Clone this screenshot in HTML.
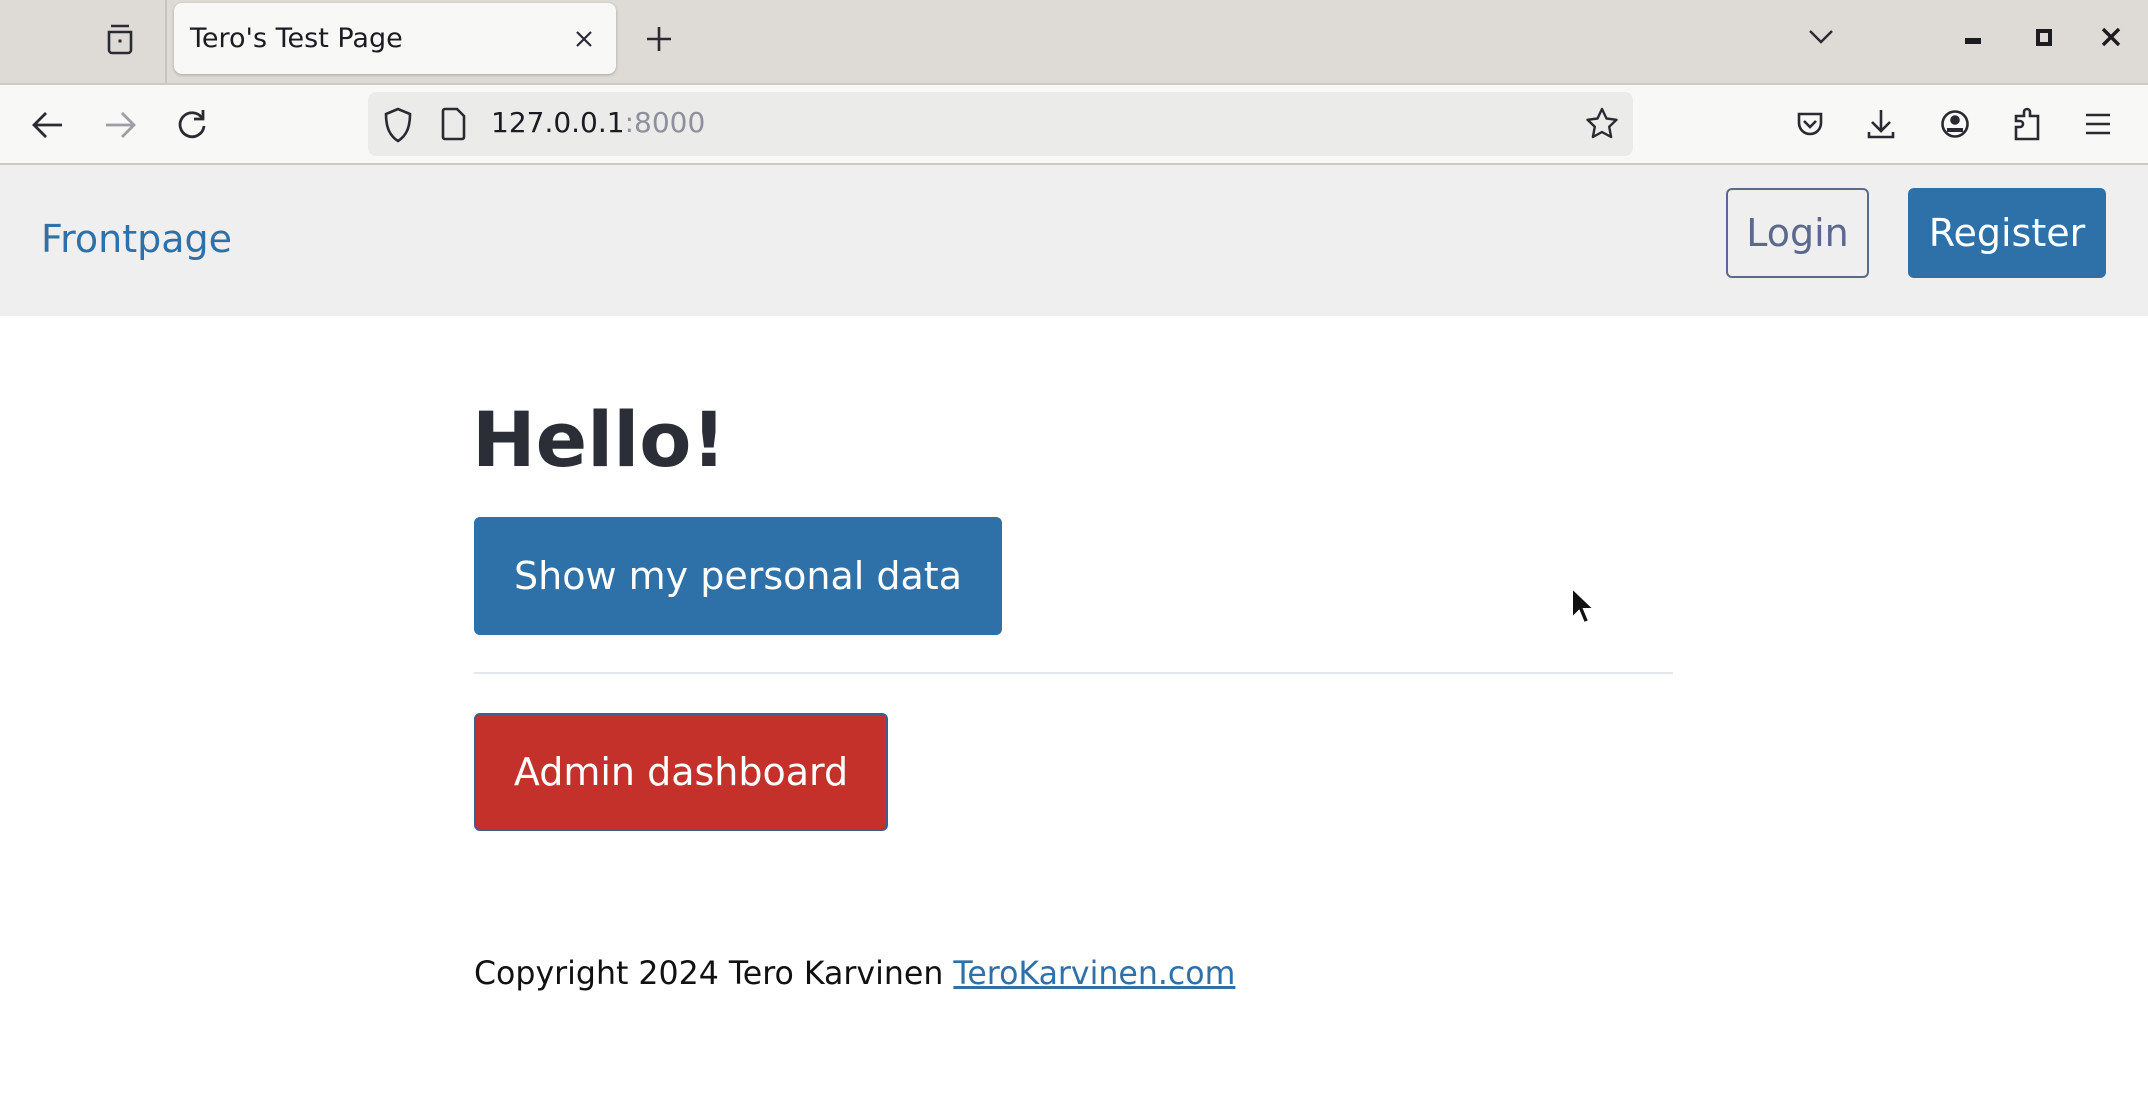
<!DOCTYPE html>
<html><head><meta charset="utf-8"><style>
*{margin:0;padding:0;box-sizing:border-box}
body{width:2148px;height:1094px;overflow:hidden;background:#fff;font-family:"DejaVu Sans","Liberation Sans",sans-serif;position:relative}
.abs{position:absolute}
#tabbar{left:0;top:0;width:2148px;height:83px;background:#dedbd6}
#toolbar{left:0;top:83px;width:2148px;height:82px;background:#f8f8f7;border-top:2px solid #cdc9c4;border-bottom:2px solid #cdc9c4}
#tab{left:174px;top:3px;width:442px;height:71px;background:#f8f8f7;border-radius:8px;box-shadow:0 1px 3px rgba(0,0,0,.25)}
#tab span{position:absolute;left:16px;top:20px;font-size:27px;color:#1c1b22}
#url{left:368px;top:92px;width:1265px;height:64px;background:#ebebea;border-radius:8px}
#navbar{left:0;top:165px;width:2148px;height:151px;background:#efefef}
.btn{position:absolute;border-radius:6px;color:#fff;font-size:38px;display:flex;align-items:center;justify-content:center}
svg{position:absolute}
</style></head><body>
<div id="tabbar" class="abs"></div>
<div class="abs" style="left:165px;top:0;width:2px;height:83px;background:#c8c4bf"></div>
<svg style="left:103px;top:22px" width="34" height="34" viewBox="0 0 34 34" fill="none" stroke="#2b2a33" stroke-width="2.6"><path d="M8 4h18M6 10h22v18a3 3 0 0 1-3 3H9a3 3 0 0 1-3-3z"/><rect x="15.5" y="17.5" width="3" height="3" fill="#2b2a33" stroke="none"/></svg>
<div id="tab" class="abs"><span>Tero's Test Page</span>
<svg style="left:400px;top:26px" width="20" height="20" viewBox="0 0 20 20" stroke="#2b2a33" stroke-width="2.2"><path d="M3 3l14 14M17 3L3 17"/></svg></div>
<svg style="left:644px;top:24px" width="30" height="30" viewBox="0 0 30 30" stroke="#2b2a33" stroke-width="2.6"><path d="M15 3v24M3 15h24"/></svg>
<svg style="left:1808px;top:28px" width="26" height="18" viewBox="0 0 26 18" fill="none" stroke="#2b2a33" stroke-width="2.4"><path d="M2 3l11 11L24 3"/></svg>
<div class="abs" style="left:1965px;top:38px;width:16px;height:6px;background:#1c1b22"></div>
<div class="abs" style="left:2036px;top:29px;width:16px;height:17px;border:4px solid #1c1b22"></div>
<svg style="left:2100px;top:26px" width="22" height="22" viewBox="0 0 22 22" stroke="#1c1b22" stroke-width="3.4"><path d="M3 3l16 16M19 3L3 19"/></svg>

<div id="toolbar" class="abs"></div>
<svg style="left:30px;top:108px" width="36" height="34" viewBox="0 0 36 34" fill="none" stroke="#2b2a33" stroke-width="2.8"><path d="M32 17H5M16 5L4 17l12 12"/></svg>
<svg style="left:102px;top:108px" width="36" height="34" viewBox="0 0 36 34" fill="none" stroke="#9e9ea6" stroke-width="2.8"><path d="M4 17h27M20 5l12 12-12 12"/></svg>
<svg style="left:174px;top:106px" width="36" height="36" viewBox="0 0 36 36" fill="none" stroke="#2b2a33" stroke-width="2.8"><path d="M28 12A12 12 0 1 0 30 20"/><path d="M29 4v9h-9" /></svg>
<div id="url" class="abs"></div>
<svg style="left:382px;top:106px" width="32" height="38" viewBox="0 0 32 38" fill="none" stroke="#2b2a33" stroke-width="2.6"><path d="M16 3L4 8c0 14 4 22 12 27 8-5 12-13 12-27z"/></svg>
<svg style="left:440px;top:106px" width="28" height="36" viewBox="0 0 28 36" fill="none" stroke="#2b2a33" stroke-width="2.6"><path d="M5 3h12l7 7v21a2 2 0 0 1-2 2H5a2 2 0 0 1-2-2V5a2 2 0 0 1 2-2z"/></svg>
<div class="abs" style="left:491px;top:106px;font-size:28px;color:#1c1b22">127.0.0.1<span style="color:#8f8f9d">:8000</span></div>
<svg style="left:1584px;top:106px" width="36" height="36" viewBox="0 0 36 36" fill="none" stroke="#2b2a33" stroke-width="2.4" stroke-linejoin="round"><path d="M18 3l4.5 9.5 10 1.3-7.3 7 1.9 10.2L18 26l-9.1 5 1.9-10.2-7.3-7 10-1.3z"/></svg>
<svg style="left:1796px;top:110px" width="28" height="28" viewBox="0 0 28 28" fill="none" stroke="#2b2a33" stroke-width="2.6"><path d="M3 4h22v9a11 11 0 0 1-22 0z"/><path d="M8 11l6 6 6-6"/></svg>
<svg style="left:1866px;top:108px" width="30" height="32" viewBox="0 0 30 32" fill="none" stroke="#2b2a33" stroke-width="2.6"><path d="M15 2v20M6 14l9 9 9-9M3 24v5h24v-5"/></svg>
<svg style="left:1940px;top:109px" width="30" height="30" viewBox="0 0 30 30" fill="none" stroke="#2b2a33" stroke-width="2.6"><circle cx="15" cy="15" r="12.5"/><circle cx="15" cy="11" r="3.5" fill="#2b2a33"/><path d="M7 21h16" stroke-width="4"/></svg>
<svg style="left:2012px;top:107px" width="30" height="34" viewBox="0 0 30 34" fill="none" stroke="#2b2a33" stroke-width="2.6"><path d="M4 32V20h4a3 3 0 0 0 0-6H4V9h8V5a3 3 0 0 1 6 0v4h8v23z"/></svg>
<svg style="left:2084px;top:112px" width="28" height="24" viewBox="0 0 28 24" stroke="#2b2a33" stroke-width="2.6"><path d="M2 3h24M2 12h24M2 21h24"/></svg>

<div id="navbar" class="abs"></div>
<div class="abs" style="left:41px;top:217px;font-size:38px;color:#2f70a8">Frontpage</div>
<div class="btn" style="left:1726px;top:188px;width:143px;height:90px;border:2px solid #5b6a8c;color:#5b6a8c;background:transparent">Login</div>
<div class="btn" style="left:1908px;top:188px;width:198px;height:90px;background:#2e70a8">Register</div>

<div class="abs" style="left:472px;top:395px;font-size:76px;font-weight:bold;color:#2b2e36">Hello!</div>
<div class="btn" style="left:474px;top:517px;width:528px;height:118px;background:#2e70a8">Show my personal data</div>
<div class="abs" style="left:474px;top:672px;width:1199px;height:2px;background:#e4e7eb"></div>
<div class="btn" style="left:474px;top:713px;width:414px;height:118px;background:#c3312a;border:2px solid #3d5e8f">Admin dashboard</div>
<div class="abs" style="left:474px;top:956px;font-size:31.6px;color:#111">Copyright 2024 Tero Karvinen <span style="color:#2f70a8;text-decoration:underline">TeroKarvinen.com</span></div>

<svg style="left:1570px;top:586px" width="26" height="40" viewBox="0 0 26 40"><path d="M2 2v30l7-7 5 12 5-2-5-12h10z" fill="#111" stroke="#fff" stroke-width="2"/></svg>
</body></html>
